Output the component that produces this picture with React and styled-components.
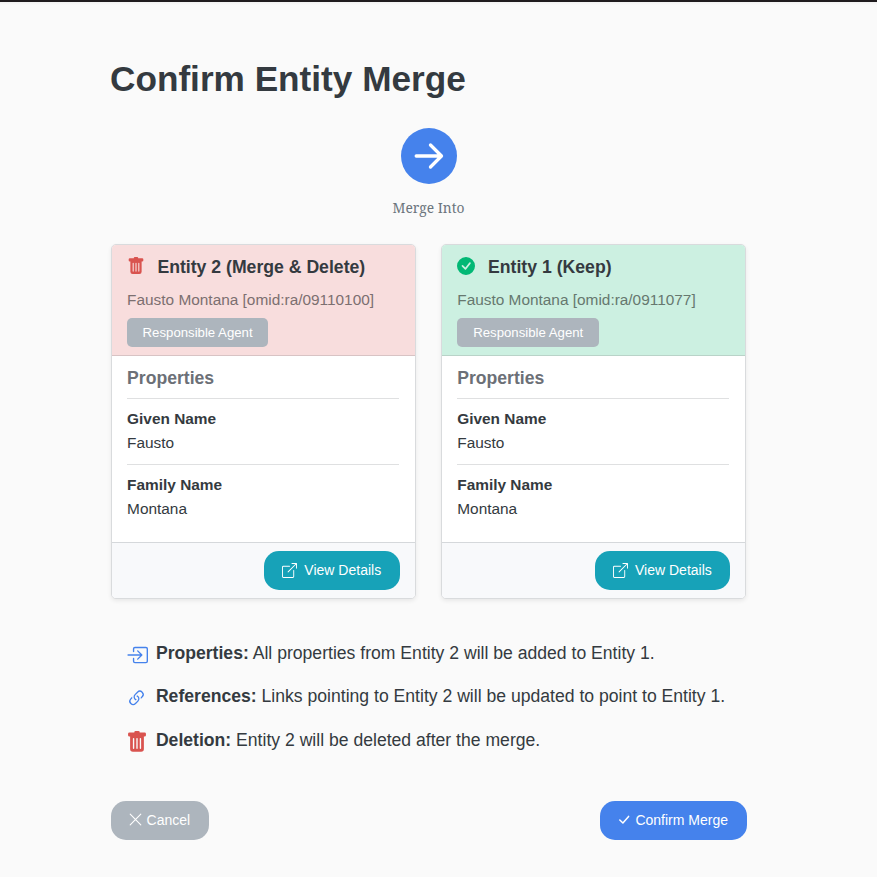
import React from "react";
import styled, { createGlobalStyle } from "styled-components";
import {
  BsTrashFill,
  BsCheckCircleFill,
  BsBoxArrowUpRight,
  BsBoxArrowInRight,
  BsLink45Deg,
} from "react-icons/bs";

const GlobalStyle = createGlobalStyle`
  *, *::before, *::after { box-sizing: border-box; }
  body {
    margin: 0;
    background: #fafafa;
    color: #343a40;
    font-family: "Liberation Sans", Arial, sans-serif;
  }
  h1, h2, h3, p, ul, dl, dt, dd { margin: 0; padding: 0; }
  svg { display: block; flex: none; }
`;

const Page = styled.div`
  height: 877px;
  border-top: 2px solid #1f1b1e;
  background: linear-gradient(#f1f1f1, #fafafa 3px);
  padding: 56px 130.6px 0 110.6px;
  overflow: hidden;
`;

const Title = styled.h1`
  margin-left: -0.6px;
  font-size: 35.2px;
  line-height: 42px;
  white-space: nowrap;
`;

const MergeIndicator = styled.div`
  display: flex;
  flex-direction: column;
  align-items: center;
  margin-top: 28px;
`;

const ArrowCircle = styled.div`
  display: grid;
  place-items: center;
  width: 56px;
  height: 56px;
  border-radius: 50%;
  background: #4582ec;
  color: #fff;
`;

const MergeLabel = styled.p`
  margin-top: 14px;
  height: 20px;
  font-family: "Noto Serif", "Droid Serif", "DejaVu Serif Condensed", serif;
  font-size: 13.8px;
  line-height: 20px;
  color: #6c757d;
`;

const Cards = styled.div`
  display: grid;
  grid-template-columns: 1fr 1fr;
  gap: 24.5px;
  margin-top: 26px;
`;

const Card = styled.section`
  height: 355px;
  display: flex;
  flex-direction: column;
  border: 1px solid #d9dbdd;
  border-radius: 5px;
  background: #fff;
  overflow: hidden;
  box-shadow: 0 2px 4px rgba(0, 0, 0, 0.075);
`;

const CardHeader = styled.header`
  height: 111px;
  padding: 9px 16px 0 15.5px;
  background: ${(p) => (p.$keep ? "#ccf0e1" : "#f8dddd")};
  border-bottom: 1px solid ${(p) => (p.$keep ? "#b9d3c8" : "#d8c3c4")};
`;

const CardTitle = styled.h2`
  display: flex;
  align-items: center;
  gap: 12.8px;
  font-size: 17.65px;
  line-height: 26px;
  white-space: nowrap;

  svg {
    width: 18px;
    height: 18px;
    margin-left: ${(p) => (p.$keep ? "0" : "-0.5px")};
    margin-top: -2px;
    color: ${(p) => (p.$keep ? "#02b875" : "#d9534f")};
  }
`;

const EntityName = styled.p`
  margin-top: 8px;
  font-size: 15.4px;
  line-height: 23px;
  color: ${(p) => (p.$keep ? "#66786f" : "#7c6f70")};
  white-space: nowrap;
`;

const Badge = styled.span`
  display: flex;
  align-items: center;
  justify-content: center;
  width: ${(p) => (p.$keep ? "142px" : "141px")};
  height: 29px;
  margin-top: 7px;
  border-radius: 5px;
  background: #adb5bd;
  color: #fff;
  font-size: 13.2px;
  white-space: nowrap;
`;

const CardBody = styled.div`
  height: 186px;
  padding: 10px 16px 0 15.5px;
`;

const SectionTitle = styled.h3`
  font-size: 17.6px;
  line-height: 24px;
  color: #6c7077;
`;

const PropertyList = styled.dl`
  margin-top: 8px;
`;

const Property = styled.div`
  height: 66px;
  border-top: 1px solid #dfe0e1;
  padding-top: 8px;
  font-size: 15.4px;
  line-height: 24px;

  dt { font-weight: 700; }
`;

const CardFooter = styled.footer`
  flex: 1;
  display: flex;
  align-items: flex-start;
  justify-content: flex-end;
  padding: 8px 15.5px 0;
  border-top: 1px solid #d5d8db;
  background: #f8f9fb;
`;

const Button = styled.button`
  display: flex;
  align-items: center;
  justify-content: center;
  gap: ${(p) => p.$gap}px;
  width: ${(p) => p.$width}px;
  height: 39px;
  padding: 0 0 1px;
  border: 0;
  border-radius: 15px;
  background: ${(p) => p.$color};
  color: #fff;
  font: 14px "Liberation Sans", Arial, sans-serif;
  white-space: nowrap;
`;

const Effects = styled.ul`
  list-style: none;
  margin-top: 32.6px;
  padding-left: 16px;
`;

const Effect = styled.li`
  display: flex;
  height: 43.4px;
  align-items: center;
  font-size: 17.6px;
  white-space: nowrap;
`;

const EffectIcon = styled.span`
  display: flex;
  width: 30px;
  margin-left: -0.7px;
  flex: none;
  padding-top: 4px;
  color: ${(p) => p.$color};
`;

const Actions = styled.div`
  display: flex;
  justify-content: space-between;
  margin: 39.2px -0.3px 0 0;
`;

const entities = [
  { title: "Entity 2 (Merge & Delete)", name: "Fausto Montana [omid:ra/09110100]", keep: false },
  { title: "Entity 1 (Keep)", name: "Fausto Montana [omid:ra/0911077]", keep: true },
];

const effects = [
  { label: "Properties:", text: "All properties from Entity 2 will be added to Entity 1.", color: "#4582ec", icon: <BsBoxArrowInRight size={22} /> },
  { label: "References:", text: "Links pointing to Entity 2 will be updated to point to Entity 1.", color: "#4582ec", icon: <BsLink45Deg size={21} /> },
  { label: "Deletion:", text: "Entity 2 will be deleted after the merge.", color: "#d9534f", icon: <BsTrashFill size={22} /> },
];

function Stroke({ size, d, weight }) {
  return (
    <svg
      width={size}
      height={size}
      viewBox={`0 0 ${size} ${size}`}
      fill="none"
      stroke="currentColor"
      strokeWidth={weight}
      strokeLinecap="round"
      strokeLinejoin="round"
    >
      <path d={d} />
    </svg>
  );
}

function EntityCard({ title, name, keep }) {
  return (
    <Card>
      <CardHeader $keep={keep}>
        <CardTitle $keep={keep}>
          {keep ? <BsCheckCircleFill /> : <BsTrashFill />}
          <span>{title}</span>
        </CardTitle>
        <EntityName $keep={keep}>{name}</EntityName>
        <Badge $keep={keep}>Responsible Agent</Badge>
      </CardHeader>
      <CardBody>
        <SectionTitle>Properties</SectionTitle>
        <PropertyList>
          <Property><dt>Given Name</dt><dd>Fausto</dd></Property>
          <Property><dt>Family Name</dt><dd>Montana</dd></Property>
        </PropertyList>
      </CardBody>
      <CardFooter>
        <Button $width={keep ? 135 : 136} $gap={7} $color="#17a2b8">
          <BsBoxArrowUpRight size={15} />
          View Details
        </Button>
      </CardFooter>
    </Card>
  );
}

export default function App() {
  return (
    <>
      <GlobalStyle />
      <Page>
        <Title>Confirm Entity Merge</Title>
        <MergeIndicator>
          <ArrowCircle>
            <Stroke size={32} weight={3.3} d="M3.2 16H28.3M17.5 5 28.5 16 17.5 27" />
          </ArrowCircle>
          <MergeLabel>Merge Into</MergeLabel>
        </MergeIndicator>
        <Cards>
          {entities.map((e) => <EntityCard key={e.title} {...e} />)}
        </Cards>
        <Effects>
          {effects.map((e) => (
            <Effect key={e.label}>
              <EffectIcon $color={e.color}>{e.icon}</EffectIcon>
              <span><strong>{e.label}</strong> {e.text}</span>
            </Effect>
          ))}
        </Effects>
        <Actions>
          <Button $width={98} $gap={4.5} $color="#adb5bd">
            <Stroke size={13} weight={1.1} d="M1.2 1.2 11.8 11.8M11.8 1.2 1.2 11.8" />
            Cancel
          </Button>
          <Button $width={147} $gap={5} $color="#4582ec">
            <Stroke size={12} weight={1.5} d="M1.8 6 4.9 9 10.6 2.4" />
            Confirm Merge
          </Button>
        </Actions>
      </Page>
    </>
  );
}
